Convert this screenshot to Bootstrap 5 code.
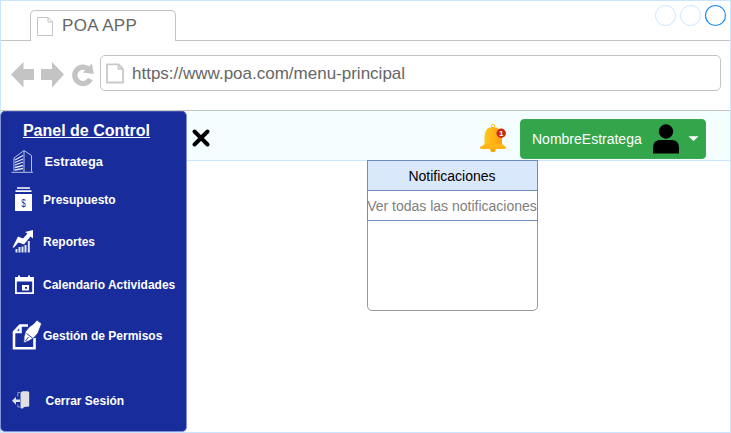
<!DOCTYPE html>
<html lang="es">
<head>
<meta charset="utf-8">
<title>POA APP</title>
<link href="https://cdn.jsdelivr.net/npm/bootstrap@5.3.0/dist/css/bootstrap.min.css" rel="stylesheet">
<style>
body{font-family:"Liberation Sans",Arial,sans-serif;line-height:1.2;background:#fff;overflow:hidden}
.window{width:731px;height:433px;border:1px solid #cce5ff}
.tabs{height:40px;border-bottom:1px solid #c4c4c4}
.tab{width:146px;height:31px;margin:9px 0 0 29px;border:1px solid #c4c4c4;border-bottom:0;border-radius:5px 5px 0 0;background:#fff;font-size:17px;color:#666}
.tab span{padding-top:5px;letter-spacing:.35px}
.dots{margin:4px 3px 0 0;overflow:visible}
.toolbar{height:70px;border-bottom:1px solid #c4c4c4}
.address{width:621px;height:36px;margin-top:14px;border:1px solid #c4c4c4;border-radius:5px;font-size:17px;color:#666}
.address span,.item span{padding-top:2px}
.side{width:187px;height:321px;margin-left:-1px;background:#182c9c;border:1px solid #8093d6;border-top-color:#3f52b4;border-radius:5px;color:#fff;font-size:12px;font-weight:700}
.side-title{height:30px;margin-top:4px;padding-right:14px;font-size:16px}
.item{height:30px;color:#fff;text-decoration:none;white-space:nowrap}
.item svg{width:42px;height:30px;flex:none}
.topbar{height:50px;background:#f5feff;border-bottom:1px solid #cce5ff}
.user{width:186px;height:40px;margin:8px 24px 0 0;padding:0;background:#33a64c;border:1px solid #3aa953;border-radius:4px;color:#fff;font-size:14px;line-height:1.2}
.user:hover{background:#33a64c;color:#fff}
.user-name{margin-left:11px}
.notes{width:171px;height:151px;margin:-1px 0 0 180px;border:1px solid #999;border-radius:0 0 5px 5px;font-size:14px;background:#fff;position:relative}
.notes-row{height:30px;margin:0 -1px;padding-top:2px;border:1px solid #6c8ebf;border-top:0;color:#808080;white-space:nowrap}
.notes-head{height:31px;margin-top:-1px;border-top:1px solid #6c8ebf;background:#dae8fc;color:#000}
.notes-row span{margin-left:-1px}
#estratega{font-size:12.8px}
#estratega span{margin-left:1.5px}
#cerrar span{margin-left:2.5px}
#presupuesto{margin-top:8px}
#reportes{margin-top:12px}
#calendario{margin-top:13px}
#permisos{margin-top:21px}
#cerrar{margin-top:35px}
</style>
</head>
<body>
<div class="window d-flex flex-column">
  <div class="tabs d-flex justify-content-between align-items-start">
    <div class="tab d-flex align-items-start">
      <svg width="31" height="30" viewBox="31 11 31 30" fill="#fff" stroke="#c4c4c4"><path d="M37.500 17.500h10.500l4.500 4.500v13.500h-15zM48 17.500v4.500h4.500"/></svg>
      <span>POA APP</span>
    </div>
    <svg class="dots" width="64" height="22" viewBox="663 5 64 22" fill="none"><circle cx="665.500" cy="15.500" r="10" stroke="#cce5ff"/><circle cx="690.500" cy="15.500" r="10" stroke="#cce5ff"/><circle cx="715.500" cy="15.500" r="10" stroke="#1e8cf0" stroke-width="1.200"/></svg>
  </div>
  <div class="toolbar d-flex">
    <svg width="99" height="69" viewBox="1 41 99 69" fill="#c4c4c4"><path d="M11 74.500 23.500 62v7h10.500v11H23.500v7.500zM64 74.500 52 62v7H41v11H52v7.500z"/><path d="M88.500 69.300A8.200 8.200 0 1 0 90.300 79" fill="none" stroke="#c4c4c4" stroke-width="5.200"/><path d="M91.800 63.500l2 10.500-11-1.500z"/></svg>
    <div class="address d-flex align-items-center">
      <svg width="31" height="34" viewBox="101 56 31 34" fill="#fff" stroke="#c9c9c9" stroke-width="1.800"><path d="M107 64.300h11.500l4.500 4.500v13.700h-16zM118.500 64.300v4.500h4.500"/></svg>
      <span>https://www.poa.com/menu-principal</span>
    </div>
  </div>
  <div class="d-flex flex-grow-1">
    <nav class="side d-flex flex-column flex-shrink-0">
      <div class="side-title d-flex align-items-center justify-content-center text-decoration-underline">Panel de Control</div>
      <a class="item d-flex align-items-center" id="estratega">
        <svg viewBox="1 146 42 30" fill="none" stroke="#b9c3ea"><path d="M11.500 172.300H33M14 171v-13l10-7.500 7.500 5v16M24 151v21" stroke-width="1"/><path d="M15 160l8-4.500M15 162.500l8-3.500M15 165l8-3M15 167.500l8-2M15 170l8-1.500" stroke="#e4e9fb" stroke-width="1.300"/></svg>
        <span>Estratega</span></a>
      <a class="item d-flex align-items-center" id="presupuesto">
        <svg viewBox="1 184 42 30" fill="#fff"><path d="M17 187.200h13v1.500H17zM15.500 190.200h16v1.800h-16zM15 194h17v17H15z"/><text x="23.400" y="206.500" text-anchor="middle" font-size="10" fill="#182c9c" font-weight="400" textLength="4.500" lengthAdjust="spacingAndGlyphs">$</text></svg>
        <span>Presupuesto</span></a>
      <a class="item d-flex align-items-center" id="reportes">
        <svg viewBox="1 226 42 30" fill="#fff"><path d="M12.500 247.500l5.500-11 5 2 4.500-5-2.500-1.500 8-2v8.500l-2.500-2-6.500 8-5.500-2-4.500 5z"/><path d="M16.500 249v3.500M19.500 247v5.500M22.500 246.500v6M25.500 245v7.500M28.800 241v11.500" stroke="#dce3fa" stroke-width="2"/></svg>
        <span>Reportes</span></a>
      <a class="item d-flex align-items-center" id="calendario">
        <svg viewBox="1 269 42 30" fill="#fff"><path fill-rule="evenodd" d="M15 277h3v-1.500h2v1.500h8v-1.500h2v1.500h4v17H15zM16.800 281.500v10.700h15.400v-10.700zM22 285h7v5.500h-7zM25 287v1.800h2V287z"/></svg>
        <span>Calendario Actividades</span></a>
      <a class="item d-flex align-items-center" id="permisos">
        <svg viewBox="1 320 42 30" fill="none"><path d="M28 325.500h-8l-6 6.500V348.300h20.500V338M13.500 332h7v-6.500" stroke="#fff" stroke-width="2.600"/><path d="M23.800 343q-.3-7 1.700-11.500 3-5 8.500-8l2.500-3q1.700-.8 2.200 1.200 3 0 2.600 2.800l-3.300 8.500q-4 6-9.500 8z" fill="#fff" stroke="#182c9c" stroke-width=".8"/><path d="M26.500 333.500l6 4.500M25.500 341l3-4" stroke="#182c9c" stroke-width=".9"/></svg>
        <span>Gestión de Permisos</span></a>
      <a class="item d-flex align-items-center" id="cerrar">
        <svg viewBox="1 385 42 30" fill="#e0e0e0"><path d="M20.500 392.500l2-1.200h5.200q1.500 0 1.500 1.500V406.500l-5 .5-2 1.700-1.700-.7z"/><path d="M20 392.500h-2.200v4M17.800 404.500v2.500h2.200" fill="none" stroke="#8d9ad4"/><path d="M12 400.800l4-4v2.700h4v2.600h-4v2.700z"/></svg>
        <span>Cerrar Sesión</span></a>
    </nav>
    <main class="flex-grow-1">
      <header class="topbar d-flex justify-content-between">
        <svg width="30" height="49" viewBox="187 111 30 49"><path d="M194.500 131.500l13 13M207.500 131.500l-13 13" stroke="#000" stroke-width="4" stroke-linecap="round"/></svg>
        <div class="d-flex">
          <svg width="44" height="49" viewBox="476 111 44 49">
            <defs><linearGradient id="gold"><stop stop-color="#ffc61a"/><stop offset="1" stop-color="#ff9e0f"/></linearGradient></defs>
            <circle cx="493" cy="126" r="1.700" fill="none" stroke="#ffc31f"/><circle cx="493" cy="149.500" r="2.700" fill="#f8a300"/>
            <path d="M484.500 146v-10q.5-9 8.500-9 8 0 9 9v10z" fill="url(#gold)"/><path d="M485 144h17l4 3v1q0 1-2 1h-22q-2 0-2-1v-1z" fill="#ffb41a"/>
            <circle cx="501.200" cy="133.300" r="4.700" fill="#c92b10"/><text x="501.200" y="136.300" text-anchor="middle" font-size="8" font-weight="700" fill="#fff">1</text></svg>
          <button class="user btn d-flex align-items-center" type="button">
            <span class="user-name">NombreEstratega</span>
            <svg class="ms-auto flex-shrink-0" width="58" height="38" viewBox="647 120 58 38"><circle cx="666" cy="131.500" r="7.200"/><path d="M653 153.500v-6q0-7 6.500-7.500h13q6.500.5 6.500 7.500v6z"/><path d="M688.500 136.300h10l-5 4.800z" fill="#fff"/></svg>
          </button>
        </div>
      </header>
      <section class="notes">
        <div class="notes-row notes-head d-flex align-items-center justify-content-center"><span>Notificaciones</span></div>
        <div class="notes-row d-flex align-items-center justify-content-center"><span>Ver todas las notificaciones</span></div>
      </section>
    </main>
  </div>
</div>
<script src="https://cdn.jsdelivr.net/npm/bootstrap@5.3.0/dist/js/bootstrap.bundle.min.js"></script>
</body>
</html>
